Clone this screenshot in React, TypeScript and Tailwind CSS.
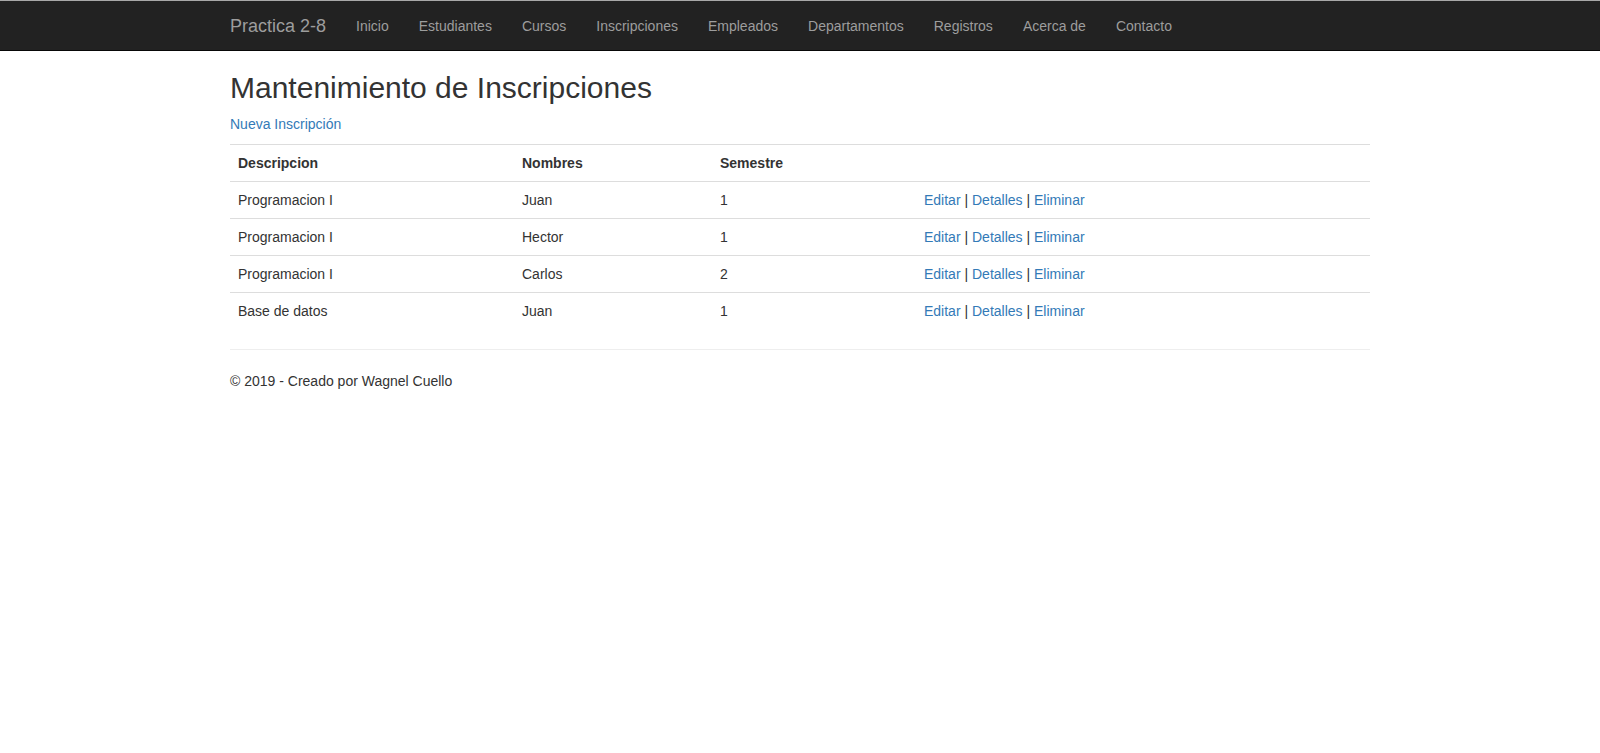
const NAV = ["Inicio", "Estudiantes", "Cursos", "Inscripciones", "Empleados", "Departamentos", "Registros", "Acerca de", "Contacto"];

const ROWS = [
  { desc: "Programacion I", name: "Juan", sem: "1" },
  { desc: "Programacion I", name: "Hector", sem: "1" },
  { desc: "Programacion I", name: "Carlos", sem: "2" },
  { desc: "Base de datos", name: "Juan", sem: "1" },
];

export default function App() {
  return (
    <div className="min-h-screen bg-white text-[14px] leading-[20px] text-[#333]" style={{ fontFamily: '"Liberation Sans", Arial, sans-serif' }}>
      <nav className="h-[51px] bg-[#222] border-t border-t-[#a8a8a8] border-b border-b-[#080808]">
        <div className="w-[1170px] mx-auto px-[15px] flex">
          <a className="-ml-[15px] px-[15px] pt-[15px] pb-[13px] text-[18px] leading-[21px] text-[#9d9d9d]">Practica 2-8</a>
          <ul className="flex">
            {NAV.map((n) => (
              <li key={n}>
                <a className="block px-[15px] pt-[15px] pb-[14px] text-[#9d9d9d]">{n}</a>
              </li>
            ))}
          </ul>
        </div>
      </nav>

      <div className="w-[1170px] mx-auto px-[15px]">
        <h2 className="mt-[20px] mb-[10px] text-[30px] leading-[33px] font-normal text-[#333]">Mantenimiento de Inscripciones</h2>
        <p className="mb-[10px]">
          <a className="text-[#337ab7]">Nueva Inscripción</a>
        </p>
        <table className="w-full mb-[20px] border-collapse">
          <tbody>
            <tr>
              <th className="w-[284px] p-[8px] text-left font-bold border-t border-[#ddd]">Descripcion</th>
              <th className="w-[198px] p-[8px] text-left font-bold border-t border-[#ddd]">Nombres</th>
              <th className="w-[204px] p-[8px] text-left font-bold border-t border-[#ddd]">Semestre</th>
              <th className="p-[8px] border-t border-[#ddd]"></th>
            </tr>
            {ROWS.map((r, i) => (
              <tr key={i}>
                <td className="p-[8px] border-t border-[#ddd]">{r.desc}</td>
                <td className="p-[8px] border-t border-[#ddd]">{r.name}</td>
                <td className="p-[8px] border-t border-[#ddd]">{r.sem}</td>
                <td className="p-[8px] border-t border-[#ddd]">
                  <a className="text-[#337ab7]">Editar</a> | <a className="text-[#337ab7]">Detalles</a> |{" "}
                  <a className="text-[#337ab7]">Eliminar</a>
                </td>
              </tr>
            ))}
          </tbody>
        </table>
        <hr className="mb-[21px] border-0 border-t border-[#eee]" />
        <footer>
          <p>© 2019 - Creado por Wagnel Cuello</p>
        </footer>
      </div>
    </div>
  );
}
